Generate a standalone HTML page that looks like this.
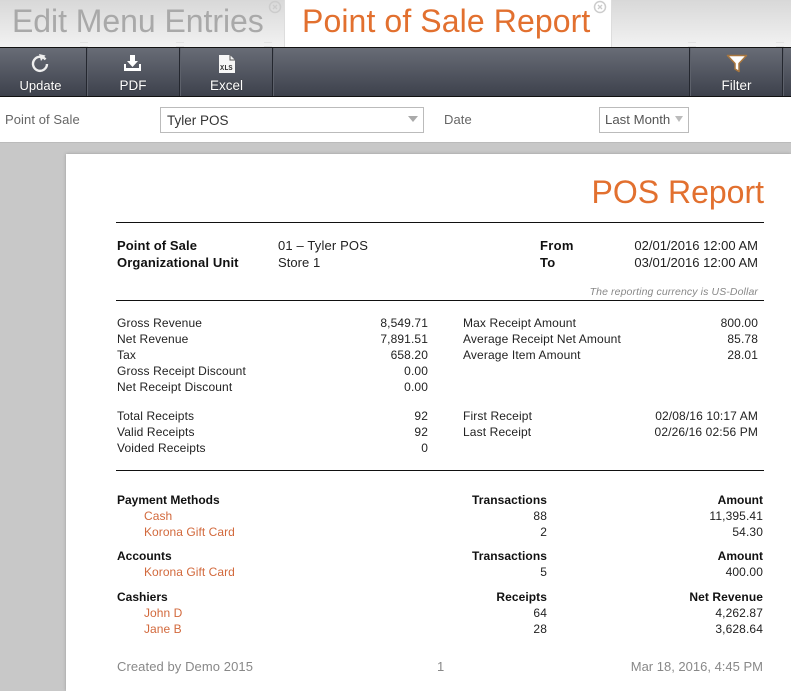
<!DOCTYPE html>
<html><head><meta charset="utf-8">
<style>
html,body{margin:0;padding:0}
body{width:791px;height:691px;overflow:hidden;position:relative;background:#c8c8c8;font-family:"Liberation Sans",sans-serif;font-size:12px;color:#222}
div,span.a{position:absolute}
.t{position:absolute;white-space:nowrap;line-height:16px;height:16px;letter-spacing:.13px}
.r{position:absolute;white-space:nowrap;line-height:16px;height:16px;text-align:right;letter-spacing:.12px}
.b{font-weight:bold;color:#111;letter-spacing:0}
.o{color:#d2693c;letter-spacing:.05px}
.tb{color:#fff;font-size:13.5px;line-height:16px;text-align:center;position:absolute;top:78px;text-shadow:0 0 1px #222}
.sep{position:absolute;top:48px;width:1px;height:48px;background:#24272f;box-shadow:1px 0 0 #5d616b}
.hr{position:absolute;left:116px;width:648px;height:1px;background:#111}
.grip{position:absolute;top:42px;width:8px;height:3px;border-top:1px solid #e2e2e2;border-bottom:1px solid #e2e2e2}
</style></head><body>
<div style="left:0;top:0;width:791px;height:47px;background:linear-gradient(#d8d8d8,#f2f2f2)"></div>
<div class="grip" style="left:80px"></div><div class="grip" style="left:176px"></div><div class="grip" style="left:264px"></div><div class="grip" style="left:688px"></div><div class="grip" style="left:776px"></div>
<div style="left:284px;top:0;width:328px;height:47px;background:#fff;border-left:1px solid #ddd;border-right:1px solid #ddd;box-sizing:border-box"></div>
<span class="t" style="left:12px;top:3px;height:36px;line-height:36px;font-size:32px;color:#a9a9a9;letter-spacing:-.05px">Edit Menu Entries</span>
<span class="t" style="left:302px;top:3px;height:36px;line-height:36px;font-size:32px;color:#e2702f;letter-spacing:.1px">Point of Sale Report</span>
<svg style="position:absolute;left:268px;top:0" width="14" height="14"><circle cx="7" cy="7" r="5.500" fill="none" stroke="#ccc" stroke-width="1.500"/><path d="M5 5l4 4M9 5l-4 4" stroke="#ccc" stroke-width="1.300"/></svg>
<svg style="position:absolute;left:593px;top:0" width="14" height="14"><circle cx="7" cy="7" r="5.500" fill="none" stroke="#ccc" stroke-width="1.500"/><path d="M5 5l4 4M9 5l-4 4" stroke="#ccc" stroke-width="1.300"/></svg>

<div style="left:0;top:47px;width:791px;height:50px;box-sizing:border-box;border-top:1px solid #111;border-bottom:1px solid #111;background:linear-gradient(#686c76,#3d414c)"></div>
<div class="sep" style="left:86px"></div><div class="sep" style="left:179px"></div><div class="sep" style="left:272px"></div><div class="sep" style="left:689px"></div><div class="sep" style="left:782px"></div>
<svg style="position:absolute;left:30px;top:53px" width="20" height="20"><path d="M15.500 6.500A7 7 0 1 0 17 11" fill="none" stroke="#eee" stroke-width="2.400"/><path d="M9 1l6.500 1.500L11 8z" fill="#eee"/></svg>
<svg style="position:absolute;left:122px;top:54px" width="22" height="20"><path d="M8 1h5v6h3l-5.500 6L5 7h3z" fill="#fff"/><path d="M2 10v7h17v-7h-2v4H4v-4z" fill="#fff"/></svg>
<svg style="position:absolute;left:217px;top:54px" width="20" height="20"><path d="M2 1h11l5 5v13H2z" fill="#f6f6f6"/><path d="M13 1v5h5" fill="none" stroke="#555" stroke-width="1"/><text x="3" y="16" font-size="7" font-weight="bold" fill="#333" font-family="Liberation Mono,monospace">XLS</text></svg>
<svg style="position:absolute;left:725px;top:53px" width="24" height="20"><path d="M2.500 2.500h19l-7.500 8v8l-4-2.500v-5.500z" fill="#fff" stroke="#a9773f" stroke-width="1.500" stroke-linejoin="round"/></svg>
<div class="tb" style="left:0;width:81px;font-size:13px">Update</div>
<div class="tb" style="left:87px;width:92px">PDF</div>
<div class="tb" style="left:180px;width:93px">Excel</div>
<div class="tb" style="left:690px;width:93px">Filter</div>

<div style="left:0;top:97px;width:791px;height:46px;background:#fff;border-bottom:1px solid #bbb;box-sizing:border-box"></div>
<span class="t" style="left:5px;top:112px;color:#666;font-size:13px;letter-spacing:.08px">Point of Sale</span>
<div style="left:160px;top:107px;width:264px;height:26px;box-sizing:border-box;border:1px solid #bbb;background:#fff"></div>
<span class="t" style="left:167px;top:113px;font-size:13.500px;color:#333;letter-spacing:0">Tyler POS</span>
<svg style="position:absolute;left:408px;top:116px" width="10" height="7"><path d="M0 0h10L5 6z" fill="#aaa"/></svg>
<span class="t" style="left:444px;top:112px;color:#666;font-size:13px;letter-spacing:.08px">Date</span>
<div style="left:599px;top:107px;width:90px;height:26px;box-sizing:border-box;border:1px solid #bbb;background:#fff"></div>
<span class="t" style="left:605px;top:112px;font-size:13.200px;color:#555;letter-spacing:0">Last Month</span>
<svg style="position:absolute;left:675px;top:116px" width="8" height="6"><path d="M0 0h8L4 6z" fill="#bbb"/></svg>

<div style="left:66px;top:154px;width:725px;height:537px;background:#fff;box-shadow:0 0 3px #999"></div>
<span class="r" style="right:27px;top:172px;height:40px;line-height:40px;font-size:32px;color:#e2702f;letter-spacing:0">POS Report</span>
<div class="hr" style="top:222px"></div>
<div class="hr" style="top:300px"></div>
<div class="hr" style="top:470px"></div>

<span class="t b" style="left:117px;top:238px;font-size:13px;letter-spacing:.1px">Point of Sale</span>
<span class="t b" style="left:117px;top:255px;font-size:13px;letter-spacing:.13px">Organizational Unit</span>
<span class="t" style="left:278px;top:238px;font-size:13px;letter-spacing:.15px">01 – Tyler POS</span>
<span class="t" style="left:278px;top:255px;font-size:13px;letter-spacing:.05px">Store 1</span>
<span class="t b" style="left:540px;top:238px;font-size:13px;letter-spacing:.3px">From</span>
<span class="t b" style="left:540px;top:255px;font-size:13px;letter-spacing:.3px">To</span>
<span class="r" style="right:33px;top:238px;font-size:13px;letter-spacing:0">02/01/2016 12:00 AM</span>
<span class="r" style="right:33px;top:255px;font-size:13px;letter-spacing:0">03/01/2016 12:00 AM</span>
<span class="r" style="right:33px;top:284px;font-size:10.500px;font-style:italic;color:#888;letter-spacing:.11px">The reporting currency is US-Dollar</span>

<span class="t" style="left:117px;top:315px">Gross Revenue</span><span class="r" style="right:363px;top:315px">8,549.71</span>
<span class="t" style="left:117px;top:331px">Net Revenue</span><span class="r" style="right:363px;top:331px">7,891.51</span>
<span class="t" style="left:117px;top:347px">Tax</span><span class="r" style="right:363px;top:347px">658.20</span>
<span class="t" style="left:117px;top:363px">Gross Receipt Discount</span><span class="r" style="right:363px;top:363px">0.00</span>
<span class="t" style="left:117px;top:379px">Net Receipt Discount</span><span class="r" style="right:363px;top:379px">0.00</span>
<span class="t" style="left:463px;top:315px">Max Receipt Amount</span><span class="r" style="right:33px;top:315px">800.00</span>
<span class="t" style="left:463px;top:331px">Average Receipt Net Amount</span><span class="r" style="right:33px;top:331px">85.78</span>
<span class="t" style="left:463px;top:347px">Average Item Amount</span><span class="r" style="right:33px;top:347px">28.01</span>

<span class="t" style="left:117px;top:408px">Total Receipts</span><span class="r" style="right:363px;top:408px">92</span>
<span class="t" style="left:117px;top:424px">Valid Receipts</span><span class="r" style="right:363px;top:424px">92</span>
<span class="t" style="left:117px;top:440px">Voided Receipts</span><span class="r" style="right:363px;top:440px">0</span>
<span class="t" style="left:463px;top:408px">First Receipt</span><span class="r" style="right:33px;top:408px">02/08/16 10:17 AM</span>
<span class="t" style="left:463px;top:424px">Last Receipt</span><span class="r" style="right:33px;top:424px">02/26/16 02:56 PM</span>

<span class="t b" style="left:117px;top:492px">Payment Methods</span><span class="r b" style="right:244px;top:492px;letter-spacing:.08px">Transactions</span><span class="r b" style="right:28px;top:492px">Amount</span>
<span class="t o" style="left:144px;top:508px">Cash</span><span class="r" style="right:244px;top:508px">88</span><span class="r" style="right:28px;top:508px">11,395.41</span>
<span class="t o" style="left:144px;top:524px">Korona Gift Card</span><span class="r" style="right:244px;top:524px">2</span><span class="r" style="right:28px;top:524px">54.30</span>
<span class="t b" style="left:117px;top:548px">Accounts</span><span class="r b" style="right:244px;top:548px;letter-spacing:.08px">Transactions</span><span class="r b" style="right:28px;top:548px">Amount</span>
<span class="t o" style="left:144px;top:564px">Korona Gift Card</span><span class="r" style="right:244px;top:564px">5</span><span class="r" style="right:28px;top:564px">400.00</span>
<span class="t b" style="left:117px;top:589px">Cashiers</span><span class="r b" style="right:244px;top:589px;letter-spacing:.08px">Receipts</span><span class="r b" style="right:28px;top:589px;letter-spacing:.08px">Net Revenue</span>
<span class="t o" style="left:144px;top:605px">John D</span><span class="r" style="right:244px;top:605px">64</span><span class="r" style="right:28px;top:605px">4,262.87</span>
<span class="t o" style="left:144px;top:621px">Jane B</span><span class="r" style="right:244px;top:621px">28</span><span class="r" style="right:28px;top:621px">3,628.64</span>

<span class="t" style="left:117px;top:659px;color:#888;font-size:13px;letter-spacing:.08px">Created by Demo 2015</span>
<span class="t" style="left:437px;top:659px;color:#888;font-size:13px">1</span>
<span class="r" style="right:28px;top:659px;color:#888;font-size:13px;letter-spacing:0">Mar 18, 2016, 4:45 PM</span>
</body></html>
